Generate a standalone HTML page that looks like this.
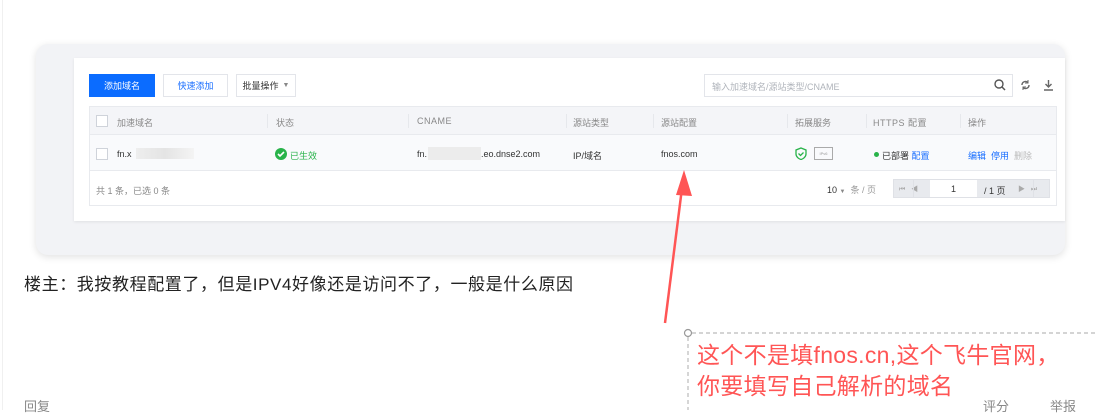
<!DOCTYPE html>
<html><head><meta charset="utf-8"><style>
*{margin:0;padding:0;box-sizing:border-box}
body{width:1095px;height:410px;overflow:hidden;background:#fff;font-family:"Liberation Sans","Noto Sans CJK SC",sans-serif;position:relative;color:#333}
.a{position:absolute}
.panel{left:36px;top:44px;width:1029px;height:211px;background:#f2f3f6;border-radius:12px;box-shadow:0 2px 8px rgba(0,0,0,.12)}
.inner{left:74px;top:58px;width:991px;height:163px;background:#fff;box-shadow:0 1px 3px rgba(0,0,0,.08)}
.t{font-size:9px;white-space:nowrap}
.btn{height:23px;border:1px solid #e3e5ea;font-size:9px;display:flex;align-items:center;justify-content:center;background:#fff}
.cb{width:12px;height:12px;border:1px solid #cfd3da;background:#fff}
.sep{width:1px;height:14px;background:#e6e8ec;top:114px}
.g{color:#888}
</style></head><body>
<div class="a" style="left:2px;top:0;width:1px;height:410px;background:#f0f0f0"></div>
<div class="a panel"></div>
<div class="a inner"></div>
<div class="a btn" style="left:89px;top:74px;width:66px;background:#0b6cff;color:#fff;border-color:#0b6cff">添加域名</div>
<div class="a btn" style="left:163px;top:74px;width:65px;color:#1a6fff">快速添加</div>
<div class="a btn" style="left:236px;top:74px;width:60px;color:#333">批量操作 <span style="font-size:7px;color:#888;margin-left:4px">▼</span></div>
<div class="a" style="left:704px;top:74px;width:309px;height:23px;border:1px solid #e3e5ea"></div>
<div class="a t" style="left:712px;top:80px;color:#b0b4bb">输入加速域名/源站类型/CNAME</div>
<svg class="a" style="left:994px;top:79px" width="12" height="12"><circle cx="5" cy="5" r="4" fill="none" stroke="#555" stroke-width="1.4"/><path d="M8 8l3 3" stroke="#555" stroke-width="1.5"/></svg>
<svg class="a" style="left:1020px;top:79px" width="11" height="12"><path d="M2 6a3.5 3.5 0 0 1 6-2.5M9 6a3.5 3.5 0 0 1-6 2.5" fill="none" stroke="#666" stroke-width="1.4"/><path d="M8 1v3h-3M3 11v-3h3" fill="none" stroke="#666" stroke-width="1"/></svg>
<svg class="a" style="left:1043px;top:79px" width="11" height="12"><path d="M5.5 1v7M2.5 5l3 3 3-3M1 11h9" fill="none" stroke="#666" stroke-width="1.4"/></svg>
<div class="a" style="left:89px;top:106px;width:968px;height:100px;border:1px solid #e8eaee"></div>
<div class="a" style="left:90px;top:107px;width:966px;height:28px;background:#f4f5f8;border-bottom:1px solid #e8eaee"></div>
<div class="a" style="left:90px;top:135px;width:966px;height:36px;background:#f9fafc;border-bottom:1px solid #e8eaee"></div>
<div class="a cb" style="left:96px;top:115px"></div>
<div class="a cb" style="left:96px;top:148px"></div>
<div class="a t g" style="left:117px;top:116px">加速域名</div>
<div class="a sep" style="left:267px"></div><div class="a t g" style="left:276px;top:116px">状态</div>
<div class="a sep" style="left:408px"></div><div class="a t g" style="left:417px;top:116px;letter-spacing:.5px">CNAME</div>
<div class="a sep" style="left:566px"></div><div class="a t g" style="left:573px;top:116px">源站类型</div>
<div class="a sep" style="left:653px"></div><div class="a t g" style="left:661px;top:116px">源站配置</div>
<div class="a sep" style="left:787px"></div><div class="a t g" style="left:795px;top:116px">拓展服务</div>
<div class="a sep" style="left:866px"></div><div class="a t g" style="left:873px;top:116px;letter-spacing:.5px">HTTPS 配置</div>
<div class="a sep" style="left:960px"></div><div class="a t g" style="left:968px;top:116px">操作</div>
<div class="a t" style="left:117px;top:149px">fn.x</div>
<div class="a" style="left:136px;top:148px;width:58px;height:11px;background:linear-gradient(90deg,#eee,#e4e4e4,#f4f4f4)"></div>
<svg class="a" style="left:275px;top:148px" width="12" height="12"><circle cx="6" cy="6" r="6" fill="#29b34a"/><path d="M3 6l2 2 4-4" fill="none" stroke="#fff" stroke-width="1.6"/></svg>
<div class="a t" style="left:290px;top:149px;color:#29b34a">已生效</div>
<div class="a t" style="left:417px;top:149px">fn.</div>
<div class="a" style="left:428px;top:147px;width:53px;height:13px;background:#ececec"></div>
<div class="a t" style="left:481px;top:149px">.eo.dnse2.com</div>
<div class="a t" style="left:573px;top:149px">IP/域名</div>
<div class="a t" style="left:661px;top:149px">fnos.com</div>
<svg class="a" style="left:795px;top:147px" width="12" height="13"><path d="M6 1l5 2v4c0 3-3 5-5 5.5C4 12 1 10 1 7V3z" fill="none" stroke="#29b34a" stroke-width="1.3"/><path d="M3.5 6.5l2 2 3-3" fill="none" stroke="#29b34a" stroke-width="1.3"/></svg>
<div class="a" style="left:814px;top:147px;width:19px;height:13px;border:1px solid #aaa;font-size:4px;color:#999;text-align:center;line-height:11px">IPv6</div>
<div class="a" style="left:874px;top:152px;width:5px;height:5px;border-radius:50%;background:#29b34a"></div>
<div class="a t" style="left:882px;top:149px">已部署 <span style="color:#1a6fff">配置</span></div>
<div class="a t" style="left:968px;top:149px;color:#1a6fff">编辑 &nbsp;停用 <span style="color:#bbb">&nbsp;删除</span></div>
<div class="a t" style="left:96px;top:184px;color:#888">共 1 条，已选 0 条</div>
<div class="a t" style="left:827px;top:183px">10 <span style="font-size:6px;color:#888">▼</span> <span style="color:#999">&nbsp;条 / 页</span></div>
<div class="a" style="left:893px;top:179px;width:157px;height:19px;background:#e8eaee;border:1px solid #dfe1e6"></div>
<div class="a" style="left:930px;top:180px;width:47px;height:17px;background:#fff"></div>
<div class="a t" style="left:951px;top:184px">1</div>
<div class="a t" style="left:984px;top:184px">/ 1 页</div>
<div class="a t" style="left:899px;top:184px;color:#aaa;font-size:7px">⏮ &nbsp; ◀</div>
<div class="a t" style="left:1018px;top:184px;color:#aaa;font-size:7px">▶ &nbsp; ⏭</div>
<div class="a" style="left:913px;top:180px;width:1px;height:17px;background:#dfe1e6"></div>
<div class="a" style="left:1033px;top:180px;width:1px;height:17px;background:#dfe1e6"></div>
<svg class="a" style="left:0;top:0" width="1095" height="410"><path d="M665 323L681.5 192" stroke="#f55" stroke-width="2.5"/><path d="M684 170L676 195L692 196Z" fill="#f55"/>
<path d="M692 333H1095" stroke="#bbb" stroke-width="1.2" stroke-dasharray="4 3"/><path d="M688 337V410" stroke="#bbb" stroke-width="1.2" stroke-dasharray="4 3"/><circle cx="688" cy="333" r="3.5" fill="#fff" stroke="#999" stroke-width="1.2"/></svg>
<div class="a" style="left:24px;top:270px;font-size:17px;letter-spacing:0.6px;color:#222;white-space:nowrap">楼主：我按教程配置了，但是IPV4好像还是访问不了，一般是什么原因</div>
<div class="a" style="left:697px;top:340px;font-size:23px;line-height:31px;letter-spacing:0.3px;color:#f55;white-space:nowrap">这个不是填fnos.cn,这个飞牛官网，<br>你要填写自己解析的域名</div>
<div class="a" style="left:24px;top:396px;font-size:13px;color:#888">回复</div>
<div class="a" style="left:983px;top:396px;font-size:13px;color:#888">评分</div>
<div class="a" style="left:1050px;top:396px;font-size:13px;color:#888">举报</div>
</body></html>
